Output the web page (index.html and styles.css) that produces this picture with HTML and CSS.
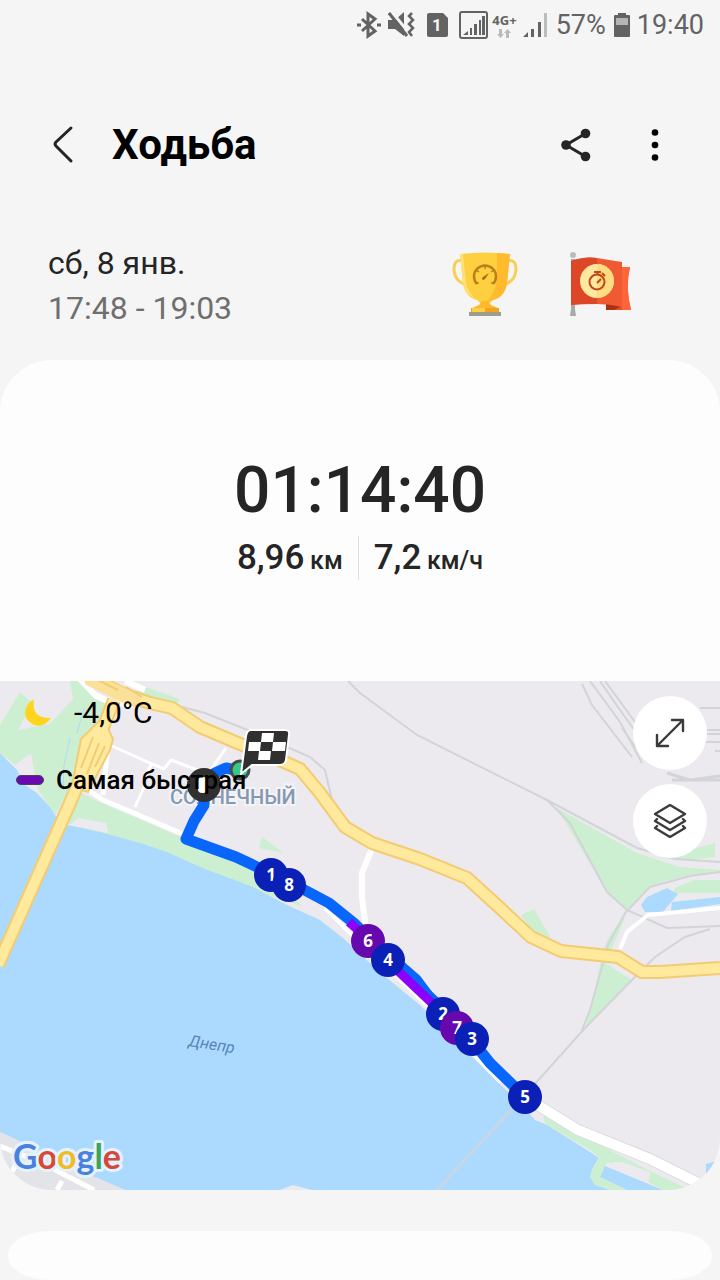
FILE: index.html
```html
<!DOCTYPE html>
<html lang="ru">
<head>
  <meta charset="UTF-8" />
  <meta name="viewport" content="width=device-width, initial-scale=1.0"/>
  <title>Ходьба</title>
  <link rel="stylesheet" href="styles.css">
</head>
<body>

  <!-- Status bar -->
  <div class="status-bar">
    <svg width="24" height="28" viewBox="0 0 24 28" fill="none" stroke="#636363" stroke-width="3">
      <path d="M5 8l13 12-7 5V3l7 5L5 20"/>
      <path d="M0 14h4M20 14h4"/>
    </svg>
    <svg class="icon-mute" width="27" height="26" viewBox="0 0 27 26">
      <path d="M0 8h7l9-8v24l-9-7H0z" fill="#636363"/>
      <path d="M4 0l17 21" stroke="#f5f5f5" stroke-width="3"/>
      <path d="M1 1l18 23" stroke="#636363" stroke-width="3"/>
      <path d="M24 1l-3 3 4 4-4 4 4 4-4 4 3 4" fill="none" stroke="#636363" stroke-width="2.500"/>
    </svg>
    <svg class="icon-sim" width="21" height="24" viewBox="0 0 21 24">
      <path d="M2 0h14l5 5v17q0 2-2 2H2q-2 0-2-2V2q0-2 2-2z" fill="#636363"/>
      <text x="10" y="18" class="sim-number">1</text>
    </svg>
    <svg class="icon-signal-box" width="29" height="28" viewBox="0 0 29 28">
      <rect x="1" y="1" width="27" height="26" rx="2" fill="none" stroke="#636363" stroke-width="2"/>
      <path d="M4 24l5-4v4zM11 17h2v7h-2zM15 13h3v11h-3zM20 9h2v15h-2zM23 5h3v19h-3z" fill="#636363"/>
    </svg>
    <div class="network">
      <span>4G+</span>
      <svg width="14" height="9" viewBox="0 0 14 9" fill="#bababa">
        <path d="M2 0h3v5h2L3.500 9 0 5h2zM9 9h3V4h2l-3.500-4L7 4h2z"/>
      </svg>
    </div>
    <svg class="icon-signal" width="25" height="25" viewBox="0 0 25 25">
      <path d="M0 24l5-5v5zM8 16h3v8H8zM15 9h3v15h-3z" fill="#636363"/>
      <path d="M21 0h3v24h-3z" fill="#bcbcbc"/>
    </svg>
    <span class="battery-level">57%</span>
    <svg class="icon-battery" width="16" height="24" viewBox="0 0 16 24">
      <path d="M4 0h8v2h3q1 0 1 1v20q0 1-1 1H1q-1 0-1-1V3q0-1 1-1h3z" fill="#636363"/>
      <path d="M2 5h12v7H2z" fill="#b5b5b5"/>
    </svg>
    <span>19:40</span>
  </div>

  <!-- Header -->
  <header class="app-header">
    <button class="icon-btn" aria-label="Назад">
      <svg width="28" height="40" viewBox="0 0 28 40" fill="none" stroke="#252525" stroke-width="3" stroke-linecap="round" stroke-linejoin="round">
        <path d="M23 3L8 17q-2 2 0 4l15 15"/>
      </svg>
    </button>
    <h1>Ходьба</h1>
    <button class="icon-btn" aria-label="Поделиться">
      <svg width="30" height="34" viewBox="0 0 30 34" fill="#252525">
        <path d="M24.500 5.500L5 17l19.500 11.500" fill="none" stroke="#252525" stroke-width="3"/>
        <circle cx="24.500" cy="5.500" r="4.800"/>
        <circle cx="5" cy="17" r="4.800"/>
        <circle cx="24.500" cy="28.500" r="4.800"/>
      </svg>
    </button>
    <button class="icon-btn" aria-label="Ещё">
      <svg width="8" height="34" viewBox="0 0 8 34">
        <circle cx="4" cy="4.500" r="3.300"/>
        <circle cx="4" cy="17" r="3.300"/>
        <circle cx="4" cy="29.500" r="3.300"/>
      </svg>
    </button>
  </header>

  <!-- Date and awards -->
  <section class="summary">
    <div class="summary-date">
      <p>сб, 8 янв.</p>
      <p class="time-range">17:48 - 19:03</p>
    </div>
    <div class="awards">
      <svg width="68" height="66" viewBox="0 0 68 66">
        <path d="M12 10Q3 7 3 19q1 12 13 15M56 10q9-3 9 9-1 12-13 15" fill="none" stroke="#f9ce57" stroke-width="3"/>
        <path d="M9 3q25-3 50 0l-3 29q-2 14-14 17l-4 4v3H30v-3l-4-4Q14 46 12 32z" fill="#fecf3f"/>
        <path d="M46 2l13 1-3 29q-2 14-14 17l-8 3Q46 42 46 23z" fill="#ffbb2b"/>
        <path d="M9 3h3l3 29q2 10 9 15-10-3-12-15z" fill="#ffe17b"/>
        <path d="M31 50h6l3 4 7 3v5H21v-5l7-3z" fill="#fdb92d"/>
        <path d="M20 57h28v5H20z" fill="#f0a51f"/>
        <path d="M21 57h13v4H21z" fill="#ffcf43"/>
        <path d="M18 61h32v4H18z" fill="#9c9d8c"/>
        <path d="M26 33a11 11 0 1 1 16 0" fill="none" stroke="#b8811c" stroke-width="2.500"/>
        <path d="M34 14v4M25 19l3 2M43 19l-3 2M24 32l4 0M40 32h4" stroke="#b8811c" stroke-width="1.500"/>
        <path d="M32 26l6-4-4 6-2 1q-2-1 0-3z" fill="#a26b12"/>
      </svg>
      <svg width="64" height="66" viewBox="0 0 64 66">
        <path d="M2 8h4v50l1 7H1l1-7z" fill="#a7a9ab"/>
        <circle cx="4" cy="4" r="3" fill="#b9bcbe"/>
        <path d="M46 16h15q-5 20 1 43H37V45z" fill="#e94c2b"/>
        <path d="M53 16h8q-5 20 1 43h-9z" fill="#ff6539"/>
        <path d="M37 53h16v2l-8 4h-8z" fill="#aa3213"/>
        <path d="M2 10q14-5 26-3t25 4v45q-12-3-25-3T2 54z" fill="#f05a32"/>
        <path d="M2 10q14-5 26-3v46q-13-1-26 1z" fill="#dc4728"/>
        <circle cx="28" cy="30" r="17" fill="#ffe9a0"/>
        <path d="M28 13a17 17 0 0 1 0 34z" fill="#ffdc81"/>
        <circle cx="28" cy="31" r="7.500" fill="none" stroke="#bd481b" stroke-width="2"/>
        <path d="M25 21h7M28.500 21v3M33 22l3 3M28 32l4-4" stroke="#bd481b" stroke-width="2"/>
      </svg>
    </div>
  </section>

  <!-- Workout card -->
  <main class="workout-card">
    <div class="stats">
      <div class="duration">01:14:40</div>
      <div class="stats-row">
        <div class="stat">8,96 <small>км</small></div>
        <div class="stat">7,2 <small>км/ч</small></div>
      </div>
    </div>

    <div class="map">
      <svg class="map-canvas" viewBox="0 681 720 509">
        <rect x="0" y="681" width="720" height="509" fill="#eceaee"/>

        <!-- Parks -->
        <g fill="#ccefd1">
          <path d="M0 725L20 692 32 703 18 730 50 724 73 699 70 681H82L95 700 118 708 100 722 82 745 72 785 55 815 38 790 31 753 15 765 0 753z"/>
          <path d="M76 790L95 800 183 838 235 860 262 873 290 893 303 907 250 888 167 854 100 834 65 822z"/>
          <path d="M142 686L180 699 174 709 135 694z"/>
          <path d="M262 837L284 853 259 848z"/>
          <path d="M557 808L637 853 680 867 720 870V873L690 875 665 881 650 887 640 897 627 910 607 892 580 847z"/>
          <path d="M694 880H720V893H674L675 888z"/>
          <path d="M660 858L715 843V857L690 860z"/>
          <path d="M521 915L534 909 551 938 535 935z"/>
          <path d="M627 912L620 930 605 963 632 980 585 1028 592 1003 603 950 610 935z"/>
          <path d="M543 1115L600 1145 648 1170 690 1190H663L648 1182 650 1172 622 1162 607 1163 600 1177 627 1190H600L590 1180V1172L600 1158 590 1150 545 1124z"/>
        </g>
        <path d="M70 825L78 818 106 823 108 833z" fill="#eceaee"/>
        <path d="M607 1164L618 1162 650 1174 648 1182z" fill="#eceaee"/>

        <!-- Water -->
        <g fill="#acdaff">
          <path d="M0 753L17 770 25 785 37 793 50 807 55 815 68 825 100 832 140 843 167 852 200 867 253 887 287 905 320 920 343 938 383 975 420 1005 460 1045 508 1092 526 1110 535 1120 547 1125 590 1152 599 1158 592 1169 590 1177 595 1185 610 1190H312L293 1185 280 1190H125L90 1175 0 1132z"/>
          <path d="M605 1166L663 1190H627L600 1177z"/>
          <path d="M641 905L647 897 667 888 678 894 663 912H645zM672 902L720 897V904L671 911zM706 1164L720 1160V1180H706z"/>
        </g>
        <path d="M70 738L64 765 63 790M84 708L77 733" fill="none" stroke="#acdaff" stroke-width="1"/>

        <!-- Railways and paths -->
        <g fill="none" stroke="#d2d4d8" stroke-width="2">
          <path d="M182 707L205 713 260 735 310 757 325 770 332 800M348 681L360 693 417 735 547 800 637 848 675 859 720 862"/>
          <path d="M547 800L570 823 607 892 627 910 667 928 720 926M720 872L690 876 650 887 625 913 608 945 590 1010 582 1030"/>
          <path d="M582 684L592 705 632 757M590 681L620 722 642 763M600 681L620 710 638 735M605 681L635 722M622 728L636 748"/>
          <path d="M700 708H720M700 730H720M700 734H720M700 742H720M715 751H720"/>
          <path d="M667 773L690 780 720 776M672 780H720" stroke-width="3"/>
          <path d="M437 1190L525 1095 585 1028 632 980 655 957 685 937 710 929"/>
        </g>

        <!-- Side streets -->
        <g fill="none" stroke="#fff" stroke-linejoin="round">
          <path d="M108 745L103 795M96 765L88 790 103 800 183 834" stroke-width="5"/>
          <path d="M112 746L150 763 164 769 171 760 208 774 226 748M151 765L143 781M145 785L135 807" stroke-width="3"/>
          <path d="M80 679L95 695 112 703 140 705M125 681L145 690" stroke-width="6"/>
          <path d="M373 846L362 873V897L366 930" stroke-width="6"/>
          <path d="M620 949L627 932 648 915 720 908" stroke-width="4"/>
          <path d="M325 908L350 933 392 972 440 1018 500 1082" stroke-width="4"/>
        </g>
        <path d="M528 1099L578 1130 650 1159 704 1186" fill="none" stroke="#dadbde" stroke-width="12"/>
        <path d="M528 1099L578 1130 650 1159 704 1186" fill="none" stroke="#fff" stroke-width="10"/>
        <path d="M0 1132L90 1175 125 1190H0z" fill="#e3e4e7"/>
        <path d="M0 1146L42 1163 94 1190M57 1190L62 1181M12 1172L17 1162" fill="none" stroke="#fff" stroke-width="5"/>

        <!-- Highways -->
        <g fill="none" stroke="#f3cb72" stroke-width="14" stroke-linejoin="round">
          <path id="highway" d="M88 676L125 695 150 703 172 708 200 727 240 744 275 758 300 769 320 793 345 827 372 843 420 859 467 878 500 908 531 937 561 951 618 957 642 972H660L720 968"/>
          <path id="bridge" d="M114 700L102 730 86 765 70 803 -2 965"/>
        </g>
        <path d="M98 722L106 724 113 739 110 750 88 792 72 786 81 739z" fill="#ffe99c" stroke="#f3cb72" stroke-width="2"/>
        <g fill="none" stroke="#ffe99c" stroke-width="10" stroke-linejoin="round">
          <use href="#highway"/>
          <use href="#bridge"/>
        </g>
        <path d="M88 678L123 695 140 702" fill="none" stroke="#fbe09a" stroke-width="14"/>
        <path d="M93 737L81 768M99 743L87 774M105 746L95 767M94 678L118 690M126 687L142 697" stroke="#f3cb72" stroke-width="2"/>

        <!-- Place names -->
        <text class="place" x="170" y="804">СОЛНЕЧНЫЙ</text>
        <text class="river" transform="translate(188 1046) rotate(9)">Днепр</text>

        <!-- Route -->
        <g fill="none" stroke="#0866fb" stroke-width="11" stroke-linejoin="round">
          <path d="M240 771L226 768 215 773 204 785V805L194 821 186 839 236 857 270 873 297 886 329 903 355 924 388 958 435 1002 470 1038 490 1063 525 1097"/>
          <path d="M394 957L418 978 436 1002" stroke-width="6"/>
          <path d="M349 922L369 940M397 970L435 1006" stroke="#8d00fb" stroke-width="9"/>
        </g>
        <circle cx="240" cy="770" r="9" fill="#36c987" stroke="#484b4d" stroke-width="3"/>
        <path d="M251 730h34q5 0 4 5l-3 25q-1 5-6 5h-28l-11 9 5-38q1-6 5-6z" fill="#303030" stroke="#fff" stroke-width="2"/>
        <path d="M262 733h12l-1 9h-12zM249 742h12l-1 9h-12zM273 742h13l-1 9h-13zM259 751h12l-1 9h-12z" fill="#fff"/>
        <circle cx="204" cy="785" r="17" fill="#303030"/>
        <rect x="198" y="777" width="9" height="16" rx="4" fill="#fff"/>

        <!-- Kilometre markers -->
        <g class="markers">
          <circle cx="271" cy="875" r="17"/><text x="271" y="881">1</text>
          <circle cx="289" cy="885" r="17"/><text x="289" y="891">8</text>
          <circle class="fast" cx="368" cy="941" r="17"/><text x="368" y="947">6</text>
          <circle cx="388" cy="960" r="17"/><text x="388" y="966">4</text>
          <circle cx="443" cy="1014" r="17"/><text x="443" y="1020">2</text>
          <circle class="fast" cx="457" cy="1028" r="17"/><text x="457" y="1034">7</text>
          <circle cx="472" cy="1039" r="17"/><text x="472" y="1045">3</text>
          <circle cx="525" cy="1097" r="17"/><text x="525" y="1103">5</text>
        </g>
      </svg>

      <div class="map-info">
        <div class="weather">
          <svg width="28" height="28" viewBox="0 0 28 28">
            <path d="M10 1Q7 20 27 19 20 29 10 26-5 18 5 4 7 1 10 1z" fill="#ffd41d"/>
          </svg>
          <span>-4,0°C</span>
        </div>
        <div class="legend"><i class="legend-line"></i><span>Самая быстрая</span></div>
      </div>

      <div class="map-buttons">
        <button aria-label="Развернуть карту">
          <svg width="32" height="32" viewBox="0 0 32 32" fill="none" stroke="#3b3b3b" stroke-width="2.400" stroke-linecap="round" stroke-linejoin="round">
            <path d="M3 29L29 3M18 3h11v11M3 18v11h11"/>
          </svg>
        </button>
        <button aria-label="Слои карты">
          <svg width="34" height="34" viewBox="0 0 34 34" fill="none" stroke="#3b3b3b" stroke-width="2.400" stroke-linecap="round" stroke-linejoin="round">
            <path d="M17 1l15 9-15 9-15-9zM4 15l-2 2 15 9 15-9-2-2M4 22l-2 2 15 9 15-9-2-2"/>
          </svg>
        </button>
      </div>

      <svg class="google-logo" width="120" height="50" viewBox="0 0 120 50">
        <text x="3" y="33"><tspan fill="#4a80df">G</tspan><tspan fill="#d5483b">o</tspan><tspan fill="#efbb27">o</tspan><tspan fill="#4a80df">g</tspan><tspan fill="#3da25b">l</tspan><tspan fill="#d5483b">e</tspan></text>
      </svg>
    </div>
  </main>

  <section class="next-card"></section>

</body>
</html>
```
FILE: styles.css
```css
* {
  box-sizing: border-box;
}

body {
  margin: 0;
  background-color: #f5f5f5;
  color: #252525;
  font-family: Roboto, "Noto Sans", sans-serif;
  overflow-x: hidden;
}

h1, p {
  margin: 0;
}

svg {
  display: block;
  flex-shrink: 0;
}

button {
  padding: 0;
  border: 0;
  background: none;
  cursor: pointer;
}

/* Status bar */
.status-bar {
  display: flex;
  align-items: center;
  justify-content: flex-end;
  height: 50px;
  padding-right: 16px;
  color: #636363;
  font-size: 27px;
}

.icon-mute {
  margin-left: 7px;
}

.icon-sim {
  margin-left: 12px;
}

.sim-number {
  fill: #f5f5f5;
  font-size: 17px;
  font-weight: 700;
  text-anchor: middle;
}

.icon-signal-box {
  margin-left: 11px;
}

.network {
  display: flex;
  flex-direction: column;
  align-items: center;
  gap: 2px;
  margin-left: 4px;
  font-family: "Open Sans", sans-serif;
  font-size: 13px;
  font-weight: 700;
  line-height: 14px;
}

.icon-signal {
  margin-left: 6px;
}

.battery-level {
  margin-left: 8px;
}

.icon-battery {
  margin: 0 7px 0 8px;
}

/* Header */
.app-header {
  display: flex;
  align-items: center;
  height: 190px;
  padding: 0 51px 0 42px;
}

.app-header h1 {
  flex: 1;
  margin-left: 30px;
  color: #000;
  font-size: 42px;
  font-weight: 700;
  line-height: 50px;
}

.icon-btn {
  display: flex;
  align-items: center;
  justify-content: center;
  width: 40px;
  height: 48px;
}

.icon-btn + .icon-btn {
  width: 28px;
  margin-left: 45px;
}

/* Date and awards */
.summary {
  display: flex;
  justify-content: space-between;
  height: 120px;
  padding: 1px 87px 0 48px;
  font-size: 32px;
  line-height: 45px;
}

.time-range {
  color: #6f6f6f;
}

.awards {
  display: flex;
  gap: 50px;
  padding-top: 10px;
}

/* Workout card */
.workout-card {
  border-radius: 52px;
  background-color: #fdfdfd;
}

.stats {
  padding: 93px 20px 101px;
  text-align: center;
  font-weight: 500;
}

.duration {
  font-size: 64px;
  line-height: 76px;
}

.stats-row {
  display: flex;
  align-items: center;
  justify-content: center;
  padding-top: 7px;
}

.stat {
  height: 44px;
  padding: 0 15px;
  font-size: 35px;
  line-height: 44px;
}

.stat + .stat {
  border-left: 1px solid #dedede;
}

.stat small {
  margin-left: -3px;
  font-size: 25px;
  line-height: 25px;
}

/* Map */
.map {
  position: relative;
}

.map-canvas {
  width: 100%;
  height: auto;
  border-radius: 0 0 52px 52px;
}

.place {
  fill: #8798b3;
  stroke: #f3f4f8;
  stroke-width: 4px;
  paint-order: stroke;
  font-size: 20px;
  font-weight: 500;
}

.river {
  fill: #5685bb;
  font-size: 16px;
  font-style: italic;
}

.markers circle {
  fill: #0b20b7;
}

.markers .fast {
  fill: #6608ad;
}

.markers text {
  fill: #fff;
  font-family: "Noto Sans", sans-serif;
  font-size: 17px;
  font-weight: 700;
  text-anchor: middle;
}

.map-info {
  position: absolute;
  top: 14px;
  left: 16px;
  color: #000;
}

.weather {
  display: flex;
  align-items: center;
  gap: 22px;
  padding-left: 8px;
  font-size: 30px;
  line-height: 36px;
}

.legend {
  display: flex;
  align-items: center;
  gap: 12px;
  margin-top: 33px;
  font-size: 26px;
  font-weight: 500;
  line-height: 32px;
}

.legend-line {
  width: 28px;
  height: 10px;
  border: 1px solid #4c3e5c;
  border-radius: 5px;
  background-color: #6a09af;
}

.map-buttons {
  position: absolute;
  top: 15px;
  right: 13px;
  display: flex;
  flex-direction: column;
  gap: 14px;
}

.map-buttons button {
  display: flex;
  align-items: center;
  justify-content: center;
  width: 74px;
  height: 74px;
  border-radius: 50%;
  background-color: #fff;
}

.google-logo {
  position: absolute;
  bottom: 4px;
  left: 10px;
}

.google-logo text {
  stroke: #e4f2fb;
  stroke-width: 6px;
  stroke-linejoin: round;
  paint-order: stroke;
  font-family: Lato, sans-serif;
  font-size: 34px;
  font-weight: 700;
}

/* Next card, cut by the bottom edge */
.next-card {
  height: 49px;
  margin: 41px 8px 0;
  border-radius: 42px / 24px;
  background-color: #fdfdfd;
}
```
